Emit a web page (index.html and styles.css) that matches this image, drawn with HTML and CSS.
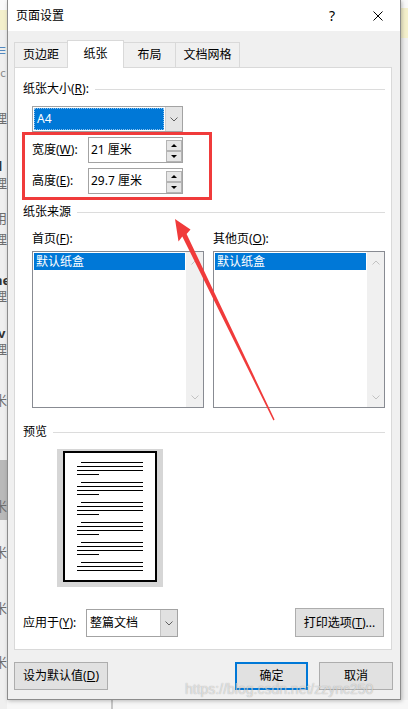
FILE: index.html
```html
<!DOCTYPE html>
<html lang="zh-CN">
<head>
<meta charset="utf-8">
<title>页面设置</title>
<link rel="stylesheet" href="styles.css">
</head>
<body>
<div class="desktop">
  <div class="backwin">
    <div class="back-left">
      <div class="back-top"></div>
      <div class="back-band"></div>
      <div class="frag frag-blue m12">≡</div>
      <div class="frag frag-small m6">ac</div>
      <div class="frag m30">理</div>
      <div class="frag frag-bold m32">d</div>
      <div class="frag m1">理</div>
      <div class="frag m19">用</div>
      <div class="frag m5">理</div>
      <div class="frag frag-bold m25">ne</div>
      <div class="frag">理</div>
      <div class="frag frag-bold m21">iv</div>
      <div class="frag">理</div>
      <div class="frag m35">米</div>
      <div class="frag frag-blue m34">：</div>
      <div class="back-block"><div class="frag">米</div></div>
      <div class="frag m8">)</div>
      <div class="frag">米</div>
      <div class="frag m22">)</div>
      <div class="frag m2">米</div>
      <div class="frag m38">米</div>
    </div>
    <div class="back-main">
      <div class="back-main-top"></div>
      <div class="back-main-band"><span></span></div>
      <div class="back-spacer"></div>
      <div class="back-bottom"><div class="back-divider"></div></div>
    </div>
  </div>

  <div class="dialog">
    <div class="titlebar">
      <span class="title">页面设置</span>
      <span class="help">?</span>
      <svg class="close" viewBox="0 0 10 10" width="10" height="10"><path d="M0.5 0.5 L9.5 9.5 M9.5 0.5 L0.5 9.5" stroke="#000" stroke-width="1" fill="none"/></svg>
    </div>
    <div class="dlg-body">
      <div class="tabs">
        <div class="tab tab-1">页边距</div>
        <div class="tab tab-2 active">纸张</div>
        <div class="tab tab-3">布局</div>
        <div class="tab tab-4">文档网格</div>
      </div>
      <div class="panel">
        <div class="group-title gt-size"><span>纸张大小(<u>R</u>):</span></div>
        <div class="combo combo-paper">
          <div class="combo-value selected">A4</div>
          <div class="combo-btn"><svg viewBox="0 0 8 5" width="8" height="5"><path d="M0.5 0.5 L4 4 L7.5 0.5" stroke="#606060" stroke-width="1" fill="none"/></svg></div>
        </div>
        <div class="highlight">
          <div class="field-row">
            <span class="field-label">宽度(<u>W</u>):</span>
            <div class="spin">
              <span class="spin-text">21 厘米</span>
              <div class="spin-btns"><div class="spin-btn"><i class="tri-up"></i></div><div class="spin-btn"><i class="tri-down"></i></div></div>
            </div>
          </div>
          <div class="field-row">
            <span class="field-label">高度(<u>E</u>):</span>
            <div class="spin">
              <span class="spin-text">29.7 厘米</span>
              <div class="spin-btns"><div class="spin-btn"><i class="tri-up"></i></div><div class="spin-btn"><i class="tri-down"></i></div></div>
            </div>
          </div>
        </div>
        <div class="group-title gt-source"><span>纸张来源</span></div>
        <div class="sources">
          <div class="source-col">
            <div class="col-label">首页(<u>F</u>):</div>
            <div class="listbox">
              <div class="list-items"><div class="list-item">默认纸盒</div></div>
              <div class="scrollbar">
                <svg viewBox="0 0 8 5" width="8" height="5"><path d="M0.5 4.5 L4 1 L7.5 4.5" stroke="#c2c2c2" stroke-width="1" fill="none"/></svg>
                <svg viewBox="0 0 8 5" width="8" height="5"><path d="M0.5 0.5 L4 4 L7.5 0.5" stroke="#c2c2c2" stroke-width="1" fill="none"/></svg>
              </div>
            </div>
          </div>
          <div class="source-col">
            <div class="col-label">其他页(<u>O</u>):</div>
            <div class="listbox">
              <div class="list-items"><div class="list-item">默认纸盒</div></div>
              <div class="scrollbar">
                <svg viewBox="0 0 8 5" width="8" height="5"><path d="M0.5 4.5 L4 1 L7.5 4.5" stroke="#c2c2c2" stroke-width="1" fill="none"/></svg>
                <svg viewBox="0 0 8 5" width="8" height="5"><path d="M0.5 0.5 L4 4 L7.5 0.5" stroke="#c2c2c2" stroke-width="1" fill="none"/></svg>
              </div>
            </div>
          </div>
        </div>
        <div class="group-title gt-preview"><span>预览</span></div>
        <div class="preview">
          <div class="page">
            <div class="para"><i class="ln indent"></i><i class="ln"></i><i class="ln"></i><i class="ln short"></i></div>
            <div class="para"><i class="ln indent"></i><i class="ln"></i><i class="ln"></i><i class="ln short"></i></div>
            <div class="para"><i class="ln indent"></i><i class="ln"></i><i class="ln"></i><i class="ln short"></i></div>
            <div class="para"><i class="ln indent"></i><i class="ln"></i><i class="ln"></i><i class="ln short"></i></div>
            <div class="para"><i class="ln indent"></i><i class="ln"></i><i class="ln"></i><i class="ln short"></i></div>
            <div class="para"><i class="ln indent"></i><i class="ln"></i><i class="ln"></i></div>
          </div>
        </div>
        <div class="apply-row">
          <span class="apply-label">应用于(<u>Y</u>):</span>
          <div class="combo combo-apply">
            <div class="combo-value">整篇文档</div>
            <div class="combo-btn"><svg viewBox="0 0 8 5" width="8" height="5"><path d="M0.5 0.5 L4 4 L7.5 0.5" stroke="#606060" stroke-width="1" fill="none"/></svg></div>
          </div>
          <button class="btn btn-print">打印选项(<u>T</u>)...</button>
        </div>
      </div>
      <div class="footer">
        <button class="btn btn-default">设为默认值(<u>D</u>)</button>
        <button class="btn btn-ok">确定</button>
        <button class="btn btn-cancel">取消</button>
      </div>
    </div>
  </div>

  <svg class="arrow" viewBox="0 0 408 709" width="408" height="709">
    <polygon points="175,219 190.5,229.5 186.6,234 274.6,419.6 273.4,420.4 182.3,236.4 178.5,241.5" fill="#f03b3b"/>
  </svg>
  <div class="watermark">https://blog.csdn.net/zzync250</div>
</div>
</body>
</html>
```

FILE: styles.css
```css
* { box-sizing: border-box; }
html, body { margin: 0; padding: 0; }
body {
  width: 408px;
  height: 709px;
  overflow: hidden;
  font-family: "Noto Sans", "Noto Sans CJK SC", sans-serif;
  font-size: 12px;
  line-height: 16px;
  color: #000;
  background: #f0f0f0;
}
u { text-decoration: underline; text-underline-offset: 1px; }

.desktop { position: relative; width: 408px; height: 709px; overflow: hidden; }

/* background window peeking around the dialog */
.backwin { position: absolute; inset: 0; display: flex; }
.back-left {
  width: 7px; height: 709px; flex: none; overflow: hidden;
  background: #efefef; display: flex; flex-direction: column;
}
.back-top { flex: none; height: 10px; background: #fafafa; }
.back-band { flex: none; height: 20px; background: #f4f0cc; }
.frag {
  flex: none; height: 16px; line-height: 16px; font-size: 13px;
  color: #6e6e6e; white-space: nowrap; text-indent: -6px;
  font-family: "Noto Sans CJK SC", sans-serif;
}
.frag-blue { color: #2f6fb5; }
.frag-bold { color: #333; font-weight: bold; font-family: "Noto Sans", sans-serif; }
.frag-small { font-size: 11px; color: #888; }
.back-block { flex: none; height: 60px; margin-top: 2px; background: #b9b9b9; padding-top: 38px; }
.m1 { margin-top: 1px; } .m2 { margin-top: 2px; } .m5 { margin-top: 5px; }
.m6 { margin-top: 6px; } .m8 { margin-top: 8px; } .m12 { margin-top: 12px; }
.m19 { margin-top: 19px; } .m21 { margin-top: 21px; } .m22 { margin-top: 22px; }
.m25 { margin-top: 25px; } .m30 { margin-top: 30px; } .m32 { margin-top: 32px; }
.m34 { margin-top: 34px; } .m35 { margin-top: 35px; } .m38 { margin-top: 38px; }

.back-main { flex: 1; display: flex; flex-direction: column; }
.back-main-top { flex: none; height: 8px; background: #fafafa; }
.back-main-band { flex: none; height: 30px; display: flex; justify-content: flex-end; }
.back-main-band span { width: 7px; background: #f4f0cc; }
.back-spacer { flex: 1; }
.back-bottom { flex: none; height: 9px; background: #f7f7f7; display: flex; }
.back-divider { margin-left: 104px; width: 2px; background: #c6c6c6; }

/* dialog window */
.dialog {
  position: absolute; left: 7px; top: 0;
  width: 394px; height: 700px;
  background: #f0f0f0;
  border: 1px solid #8c8c8c; border-top: 0;
  box-shadow: 1px 1px 4px rgba(0,0,0,0.25);
  display: flex; flex-direction: column;
}
.titlebar {
  flex: none; height: 31px; background: #fff;
  display: flex; align-items: center;
  padding: 0 17px 0 8px;
}
.title { flex: 1; }
.help { width: 12px; text-align: center; font-size: 14px; margin-right: 35px; }
.close { display: block; flex: none; }

.dlg-body {
  flex: 1; display: flex; flex-direction: column;
  padding: 9px 8px 9px 6px;
}

.tabs { flex: none; height: 27px; display: flex; align-items: flex-end; }
.tab {
  height: 25px; border: 1px solid #d9d9d9; border-bottom: 0;
  background: #f0f0f0; display: flex; align-items: center; justify-content: center;
  margin-left: -1px;
}
.tab-1 { width: 54px; margin-left: 0; }
.tab-2 { width: 57px; }
.tab-3 { width: 53px; }
.tab-4 { width: 65px; }
.tab.active {
  height: 28px; margin-bottom: -1px; padding-bottom: 1px;
  background: #fff; position: relative; z-index: 1;
}

.panel {
  flex: none; height: 583px;
  background: #fff; border: 1px solid #d9d9d9;
  padding: 0 6px 0 8px;
}

.group-title { display: flex; align-items: center; gap: 6px; height: 16px; }
.group-title::after { content: ""; flex: 1; height: 1px; background: #dcdcdc; }
.gt-size { margin-top: 13px; }
.gt-source { margin-top: 4px; }
.gt-preview { margin-top: 16px; }

.combo { display: flex; border: 1px solid #a3a3a3; background: #fff; }
.combo-value { flex: 1; display: flex; align-items: center; padding-left: 3px; }
.combo-value.selected {
  margin: 1px; background: #0078d7; color: #fff;
  outline: 1px dotted rgba(255,255,255,0.55); outline-offset: -1px;
}
.combo-btn {
  width: 17px; flex: none; background: #e5e5e5;
  border-left: 1px solid #d0d0d0;
  display: flex; align-items: center; justify-content: center;
}
.combo-btn svg { display: block; }
.combo-paper { width: 151px; height: 26px; margin: 9px 0 0 9px; }

.highlight {
  margin-left: -1px; width: 190px; height: 68px;
  border: 3px solid #f03b3b;
  padding: 2px 0 0 7px;
  display: flex; flex-direction: column; gap: 5px;
}
.field-row { display: flex; align-items: center; height: 26px; }
.field-label { width: 56px; flex: none; }
.spin {
  width: 95px; height: 26px; border: 1px solid #a3a3a3; background: #fff;
  display: flex; padding-left: 2px;
}
.spin-text { flex: 1; display: flex; align-items: center; }
.spin-btns { display: flex; flex-direction: column; padding-top: 2px; }
.spin-btn {
  width: 16px; height: 11px; background: #e6e6e6; border: 1px solid #b4b4b4;
  display: flex; align-items: center; justify-content: center;
}
.tri-up, .tri-down { display: block; width: 0; height: 0; border-left: 3px solid transparent; border-right: 3px solid transparent; }
.tri-up { border-bottom: 3px solid #000; }
.tri-down { border-top: 3px solid #000; }

.sources { margin: 11px 0 0 9px; display: flex; gap: 9px; }
.source-col { width: 172px; }
.listbox {
  margin-top: 4px; height: 157px;
  border: 1px solid #888b92; background: #fff; display: flex;
}
.list-items { flex: 1; padding: 1px; }
.list-item {
  height: 17px; line-height: 17px; padding-left: 2px;
  background: #0078d7; color: #fff;
}
.scrollbar {
  width: 17px; flex: none; background: #f0f0f0;
  display: flex; flex-direction: column; justify-content: space-between; align-items: center;
  padding: 8px 0 7px;
}
.scrollbar svg { display: block; }

.preview {
  margin: 9px 0 0 34px; width: 106px; height: 138px;
  background: #d6d6d6; padding: 2px 0 0 6px;
}
.page {
  width: 94px; height: 131px; background: #fff; border: 2px solid #000;
  padding: 9px 0 0 12px;
  display: flex; flex-direction: column; gap: 7px;
}
.para { display: flex; flex-direction: column; gap: 3px; }
.ln { display: block; height: 1px; width: 66px; background: #000; }
.ln.indent { margin-left: 4px; width: 62px; }
.ln.short { width: 22px; }

.apply-row { margin-top: 21px; height: 29px; display: flex; align-items: flex-end; }
.apply-label { width: 63px; flex: none; align-self: center; }
.combo-apply { width: 92px; height: 28px; }
.combo-apply .combo-btn { background: #e1e1e1; border-left: 1px solid #c4c4c4; }

.btn {
  background: #e1e1e1; border: 1px solid #adadad;
  display: flex; align-items: center; justify-content: center;
  font: inherit; color: #000; padding: 0; margin: 0;
}
.btn-print { margin-left: auto; margin-right: 1px; width: 89px; height: 29px; }

.footer { flex: none; margin-top: 12px; margin-right: -1px; height: 28px; display: flex; }
.btn-default { width: 94px; }
.btn-ok { width: 73px; margin-left: auto; border: 2px solid #0078d7; }
.btn-cancel { width: 74px; margin-left: 11px; }

.arrow { position: absolute; left: 0; top: 0; pointer-events: none; }
.watermark {
  position: absolute; left: 185px; top: 681px;
  font-family: "Liberation Sans", Arial, sans-serif; font-size: 14px; line-height: 16px;
  color: rgba(255,255,255,0.6);
  text-shadow: 0 0 1px rgba(0,0,0,0.35);
  white-space: nowrap; pointer-events: none;
}
```
